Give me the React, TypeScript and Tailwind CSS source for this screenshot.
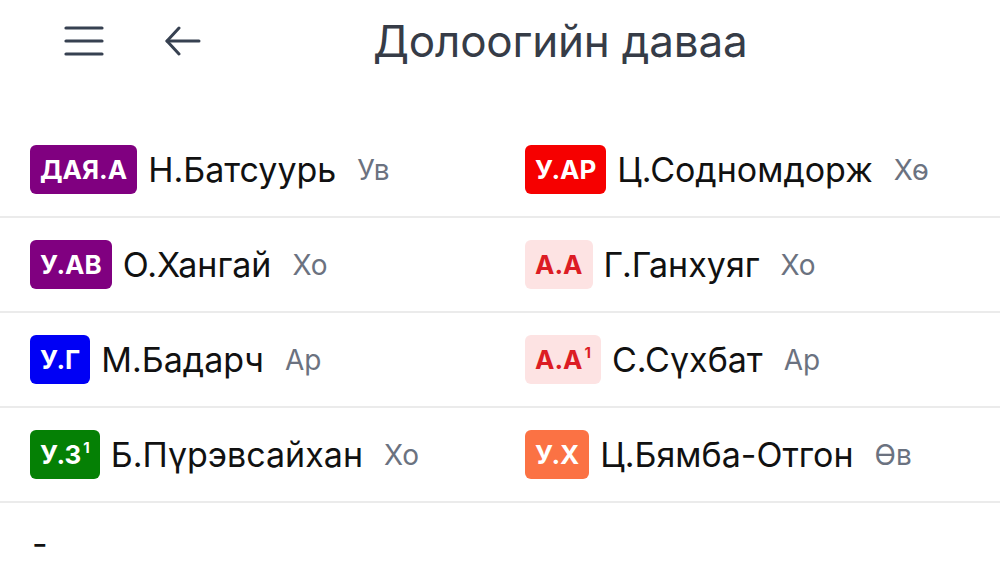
import React from 'react';

type Person = {
    badge: string;
    sup?: boolean;
    badgeClass: string;
    name: string;
    region: string;
};

const rows: [Person, Person][] = [
    [
        { badge: 'ДАЯ.А', badgeClass: 'bg-[#800080] text-white', name: 'Н.Батсуурь', region: 'Ув' },
        { badge: 'У.АР', badgeClass: 'bg-[#f60000] text-white', name: 'Ц.Содномдорж', region: 'Хө' },
    ],
    [
        { badge: 'У.АВ', badgeClass: 'bg-[#800080] text-white', name: 'О.Хангай', region: 'Хо' },
        { badge: 'А.А', badgeClass: 'bg-[#fde3e3] text-[#dc1c24]', name: 'Г.Ганхуяг', region: 'Хо' },
    ],
    [
        { badge: 'У.Г', badgeClass: 'bg-[#0000f5] text-white', name: 'М.Бадарч', region: 'Ар' },
        { badge: 'А.А', sup: true, badgeClass: 'bg-[#fde3e3] text-[#dc1c24]', name: 'С.Сүхбат', region: 'Ар' },
    ],
    [
        { badge: 'У.З', sup: true, badgeClass: 'bg-[#058005] text-white', name: 'Б.Пүрэвсайхан', region: 'Хо' },
        { badge: 'У.Х', badgeClass: 'bg-[#fb7244] text-white', name: 'Ц.Бямба-Отгон', region: 'Өв' },
    ],
];

const Entry: React.FC<{ p: Person }> = ({ p }) => (
    <div className="flex items-center">
        <span className={`h-[49px] px-[10px] flex items-center rounded-[6px] text-[26px] font-bold leading-none ${p.badgeClass}`}>
            {p.badge}
            {p.sup && <span className="ml-[2px] self-start mt-[10px] text-[15px] leading-none">1</span>}
        </span>
        <span className="ml-[11px] text-[34px] text-[#111111] leading-none">{p.name}</span>
        <span className="ml-[21px] text-[28px] text-[#6b7280] leading-none">{p.region}</span>
    </div>
);

const App: React.FC = () => {
    return (
        <div className="w-[1000px] h-[570px] bg-white overflow-hidden" style={{ fontFamily: 'Inter, "Noto Sans", sans-serif' }}>
            <header className="h-[82px] flex items-center pl-[64px]">
                <svg width="40" height="30" viewBox="0 0 40 30" className="text-[#374151]">
                    <g stroke="currentColor" strokeWidth="3.2" strokeLinecap="round">
                        <line x1="2" y1="2" x2="38" y2="2" />
                        <line x1="2" y1="15" x2="38" y2="15" />
                        <line x1="2" y1="28" x2="38" y2="28" />
                    </g>
                </svg>
                <svg width="36" height="30" viewBox="0 0 36 30" className="ml-[61px] text-[#374151]">
                    <g stroke="currentColor" strokeWidth="3" strokeLinecap="round" strokeLinejoin="round" fill="none">
                        <path d="M34 15H2" />
                        <path d="M14 2L2 15L14 28" />
                    </g>
                </svg>
                <h1 className="ml-[172px] text-[44px] text-[#363c47] leading-none tracking-[-0.2px]">
                    Долоогийн даваа
                </h1>
            </header>

            <div className="mt-[41px]">
                {rows.map((pair, i) => (
                    <div key={i} className="h-[95px] grid grid-cols-2 gap-x-[50px] px-[30px] items-center border-b-2 border-[#ebebeb]">
                        <Entry p={pair[0]} />
                        <Entry p={pair[1]} />
                    </div>
                ))}
                <div className="pl-[32px] pt-[24px] text-[34px] leading-none text-[#111111]">-</div>
            </div>
        </div>
    );
};

export default App;
